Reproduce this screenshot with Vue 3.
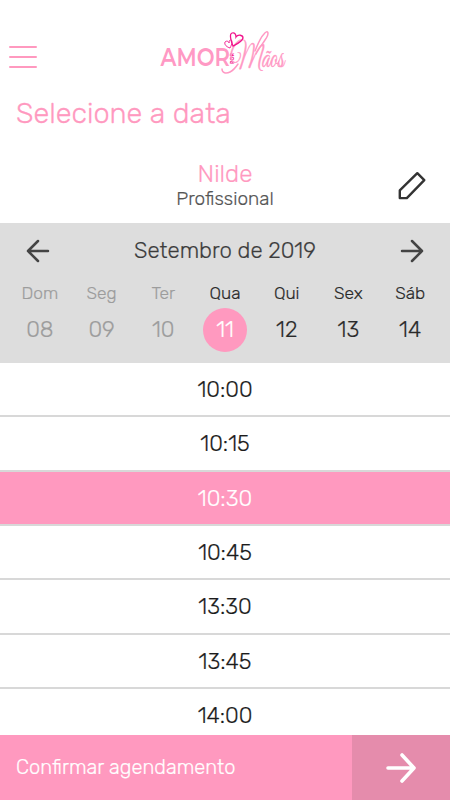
<template>
  <div class="screen">
    <header class="topbar">
      <button class="menu" aria-label="Menu">
        <span></span>
        <span></span>
        <span></span>
      </button>
      <svg class="logo" viewBox="0 0 130 50" width="130" height="50">
        <text class="logo-amor" x="1.5" y="38" textLength="69.5" lengthAdjust="spacingAndGlyphs">AMOR</text>
        <text class="logo-por" transform="translate(75.2 36) rotate(-90)" textLength="11" lengthAdjust="spacingAndGlyphs">POR</text>
        <text class="logo-maos" x="71" y="38.5" textLength="54" lengthAdjust="spacingAndGlyphs">Mãos</text>
        <path class="swash" d="M96 23 C99 16 101 10 105 6 C109 1 111 5 106 12 C102 18 99 22 97 26" />
        <path class="swash" d="M63 41 C63 45 67 46 71 44 C75 42 77 39 79 36" />
        <path class="heart" d="M74 18 C72 13 70 6 73 5 C76 4 77 7 77 9 C79 6 84 7 84 10 C83 14 78 16 74 18Z" />
        <path class="heart small" d="M71 20 C68 19 65 17 66 14 C68 12 70 14 70 15 C70 11 73 11 73 14 C73 16 72 18 71 20Z" />
      </svg>
    </header>

    <h1 class="title">Selecione a data</h1>

    <section class="professional">
      <div class="professional-info">
        <p class="name">Nilde</p>
        <p class="role">Profissional</p>
      </div>
      <svg class="edit" viewBox="0 0 32 32" width="32" height="32">
        <path d="M3.8 20.4 L21.3 3.2 L28.3 10.2 L10.8 28.1 H3.8 Z" />
      </svg>
    </section>

    <section class="calendar">
      <div class="month">
        <svg class="arrow" viewBox="0 0 24 24" width="24" height="24">
          <path d="M22 12 H2 M12 2 L2 12 L12 22" />
        </svg>
        <span class="month-name">Setembro de 2019</span>
        <svg class="arrow" viewBox="0 0 24 24" width="24" height="24">
          <path d="M2 12 H22 M12 2 L22 12 L12 22" />
        </svg>
      </div>
      <div class="days">
        <div
          v-for="day in days"
          :key="day.number"
          class="day"
          :class="{ past: day.past, selected: day.number === selectedDay }"
          @click="selectDay(day)"
        >
          <span class="weekday">{{ day.name }}</span>
          <span class="number">{{ day.number }}</span>
        </div>
      </div>
    </section>

    <ul class="times">
      <li
        v-for="time in times"
        :key="time"
        :class="{ selected: time === selectedTime }"
        @click="selectedTime = time"
      >{{ time }}</li>
    </ul>

    <footer class="confirm">
      <span class="confirm-label">Confirmar agendamento</span>
      <span class="confirm-arrow">
        <svg class="arrow" viewBox="0 0 32 32" width="32" height="32">
          <path d="M3 16 H28 M17 3 L29 16 L17 29" />
        </svg>
      </span>
    </footer>
  </div>
</template>

<script setup>
import { ref } from 'vue'

const days = [
  { name: 'Dom', number: '08', past: true },
  { name: 'Seg', number: '09', past: true },
  { name: 'Ter', number: '10', past: true },
  { name: 'Qua', number: '11' },
  { name: 'Qui', number: '12' },
  { name: 'Sex', number: '13' },
  { name: 'Sáb', number: '14' }
]
const times = ['10:00', '10:15', '10:30', '10:45', '13:30', '13:45', '14:00']

const selectedDay = ref('11')
const selectedTime = ref('10:30')

function selectDay(day) {
  if (!day.past) selectedDay.value = day.number
}
</script>

<style>
body {
  margin: 0;
  background: #fff;
}
</style>

<style scoped>
.screen {
  display: flex;
  flex-direction: column;
  width: 450px;
  height: 800px;
  overflow: hidden;
  background: #fff;
  color: #333;
  font-family: Rubik, Roboto, sans-serif;
  font-weight: 300;
  -webkit-text-stroke-width: 0.2px;
}

.topbar {
  display: flex;
  align-items: flex-start;
  gap: 122px;
  height: 68px;
  padding: 28px 0 0 9px;
  box-sizing: border-box;
  flex: none;
}

.menu {
  display: flex;
  flex-direction: column;
  gap: 7.5px;
  width: 28px;
  margin-top: 18px;
  padding: 0;
  border: 0;
  background: none;
}

.menu span {
  height: 2.4px;
  border-radius: 1px;
  background: #ff99bf;
}

.logo {
  overflow: visible;
  -webkit-text-stroke-width: 0;
}

.logo-amor {
  font: 600 26.5px Montserrat, Lato, sans-serif;
  fill: #ff99c4;
}

.logo-por {
  font: 700 6px Montserrat, Lato, sans-serif;
  fill: #f0148c;
}

.logo-maos {
  font: 34px "Great Vibes", "Liberation Serif", serif;
  fill: #ff99c4;
  stroke: #ff99c4;
  stroke-width: 0.4;
}

.swash {
  fill: none;
  stroke: #ff99c4;
  stroke-width: 1.5;
  stroke-linecap: round;
}

.heart {
  fill: none;
  stroke: #f0148c;
  stroke-width: 1.3;
}

.heart.small {
  stroke-width: 0.9;
}

.title {
  flex: none;
  height: 32px;
  margin: 30px 0 0 16px;
  font-size: 28.9px;
  font-weight: 300;
  line-height: 31px;
  color: #ff99bf;
  -webkit-text-stroke-width: 0.3px;
}

.professional {
  display: flex;
  flex: none;
  height: 93px;
  padding: 0 22px 0 54px;
  box-sizing: border-box;
}

.professional-info {
  flex: 1;
  padding-top: 30px;
  text-align: center;
}

.professional p {
  margin: 0;
}

.professional .name {
  font-size: 24.3px;
  line-height: 28px;
  color: #ff99bf;
}

.professional .role {
  font-size: 19px;
  line-height: 22px;
  color: #555;
}

.edit {
  margin-top: 40px;
}

.edit path {
  fill: none;
  stroke: #333;
  stroke-width: 2.4;
  stroke-linejoin: round;
}

.calendar {
  flex: none;
  height: 140px;
  background: #ddd;
}

.month {
  display: flex;
  align-items: center;
  justify-content: space-between;
  height: 55px;
  padding: 0 26px;
}

.month-name {
  font-size: 22.2px;
  color: #3c3c3c;
}

.arrow {
  fill: none;
  stroke: #444;
  stroke-width: 2.5;
  stroke-linecap: round;
  stroke-linejoin: round;
}

.days {
  display: grid;
  grid-template-columns: repeat(7, 1fr);
  padding: 0 9px;
}

.day {
  display: flex;
  flex-direction: column;
  align-items: center;
  color: #2a2a2a;
}

.day.past {
  color: #9c9c9c;
}

.weekday {
  height: 30.4px;
  font-size: 17.4px;
  line-height: 30px;
}

.number {
  width: 44px;
  height: 44px;
  border-radius: 50%;
  font-size: 22.2px;
  line-height: 44px;
  text-align: center;
}

.selected .number {
  background: #ff99bf;
  color: #fff;
}

.times {
  flex: 1;
  min-height: 0;
  margin: 0;
  padding: 0;
  overflow: hidden;
  list-style: none;
}

.times li {
  height: 54.33px;
  box-sizing: border-box;
  border-bottom: 2px solid #d8d8d8;
  font-size: 22.2px;
  line-height: 53.2px;
  text-align: center;
  color: #1c1c1c;
}

.times .selected {
  background: #ff99bf;
  color: #fff;
}

.confirm {
  display: flex;
  flex: none;
  height: 65px;
  background: #ff99bf;
  color: #fff;
}

.confirm-label {
  flex: 1;
  padding-left: 16px;
  font-size: 20.1px;
  line-height: 65px;
}

.confirm-arrow {
  display: flex;
  align-items: center;
  justify-content: center;
  width: 98px;
  background: #e58cac;
}

.confirm-arrow .arrow {
  stroke: #fff;
  stroke-width: 3.6;
}
</style>
